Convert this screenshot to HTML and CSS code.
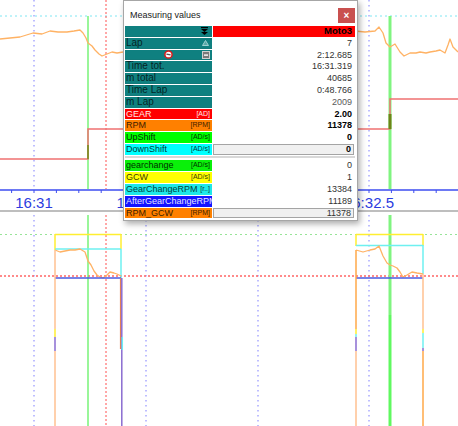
FILE: index.html
```html
<!DOCTYPE html>
<html>
<head>
<meta charset="utf-8">
<title>Measuring values</title>
<link rel="stylesheet" href="styles.css">
</head>
<body>
<div class="stage">
  <svg class="chart" width="458" height="426" viewBox="0 0 458 426">
    <defs>
      <clipPath id="clipL"><rect x="0" y="180" width="123" height="40"/></clipPath>
      <clipPath id="clipR"><rect x="358" y="180" width="100" height="40"/></clipPath>
    </defs>
    <!-- dotted grid -->
    <g class="dot-blue">
      <line x1="34" y1="0" x2="34" y2="189"/><line x1="34" y1="215" x2="34" y2="426"/>
      <line x1="146" y1="0" x2="146" y2="189"/><line x1="146" y1="215" x2="146" y2="426"/>
      <line x1="258" y1="0" x2="258" y2="189"/><line x1="258" y1="215" x2="258" y2="426"/>
      <line x1="369" y1="0" x2="369" y2="189"/><line x1="369" y1="215" x2="369" y2="426"/>
    </g>
    <line class="dot-cyan" x1="0" y1="16" x2="458" y2="16"/>
    <line class="dot-green" x1="0" y1="234.5" x2="458" y2="234.5"/>
    <line class="dot-redh" x1="0" y1="276" x2="458" y2="276"/>
    <line class="dot-red" x1="106" y1="0" x2="106" y2="189"/>
    <line class="dot-red" x1="106" y1="215" x2="106" y2="426"/>

    <!-- time axis -->
    <line class="axis" x1="0" y1="190" x2="458" y2="190"/>
    <g class="ticks">
      <line x1="11.6" y1="190" x2="11.6" y2="193"/><line x1="34" y1="190" x2="34" y2="193"/>
      <line x1="56.4" y1="190" x2="56.4" y2="193"/><line x1="78.8" y1="190" x2="78.8" y2="193"/>
      <line x1="101.2" y1="190" x2="101.2" y2="193"/><line x1="369" y1="190" x2="369" y2="193"/>
      <line x1="391.4" y1="190" x2="391.4" y2="193"/><line x1="413.8" y1="190" x2="413.8" y2="193"/>
      <line x1="436.2" y1="190" x2="436.2" y2="193"/>
    </g>
    <text class="tlabel" x="34" y="207.5">16:31</text>
    <g clip-path="url(#clipL)"><text class="tlabel tstart" x="116.5" y="207.5">1</text></g>
    <g clip-path="url(#clipR)"><text class="tlabel tend" x="394" y="207.5">6:32.5</text></g>
    <line class="sep" x1="0" y1="211" x2="458" y2="211"/>

    <!-- green cursors -->
    <line class="g1" x1="88" y1="16" x2="88" y2="189"/>
    <line class="g1" x1="88" y1="215" x2="88" y2="426"/>
    <line class="g2" x1="390" y1="16" x2="390" y2="189"/>
    <line class="g2" x1="390" y1="215" x2="390" y2="315"/>
    <line class="g3" x1="390" y1="315" x2="390" y2="426"/>

    <!-- top traces -->
    <polyline class="orange" points="0,39 20,37 33,33 42,34 50,31 58,32 67,32 74,31 80,30 83,33 86,38 88,43 92,46 95,50 99,54 102,56 107,54 112,52 117,53 123,52"/>
    <polyline class="orange" points="355,31 365,32 375,31 379,27 383,33 386,43 390,47 395,44 400,52 404,56 410,53 416,53 420,52 426,53 430,52 436,51 440,50 445,53 448,45 450,39 453,47 458,52"/>
    <polyline class="redline" points="0,159 88,159 88,129 130,129"/>
    <polyline class="redline" points="340,129 390,129 390,99 458,99"/>
    <line class="olive" x1="88" y1="145" x2="88" y2="159"/>
    <line class="olive2" x1="390" y1="114" x2="390" y2="129"/>

    <!-- bottom pulses: left -->
    <line class="yel" x1="55" y1="234.5" x2="121" y2="234.5"/>
    <line class="yel" x1="55" y1="234" x2="55" y2="250"/>
    <line class="yel" x1="121" y1="234" x2="121" y2="249"/>
    <line class="cya" x1="55" y1="249" x2="121" y2="249"/>
    <line class="cya" x1="121" y1="249" x2="121" y2="278"/>
    <polyline class="orange" points="55,250 60,252 65,251 70,250 75,250 80,249 85,252 88,261 91,265 94,271 97,275 100,277 103,278 107,275 110,272 114,273 117,274 121,276"/>
    <line class="blu" x1="55" y1="278" x2="121" y2="278"/>
    <line class="ovt" x1="55" y1="250" x2="55" y2="329"/>
    <line class="yel" x1="55" y1="329" x2="55" y2="337"/>
    <line class="pur" x1="55" y1="337" x2="55" y2="351"/>
    <line class="ovt" x1="55" y1="351" x2="55" y2="426"/>
    <line class="brn" x1="120.5" y1="278" x2="120.5" y2="349"/>
    <line class="pur" x1="121.8" y1="278" x2="121.8" y2="426"/>
    <line class="cya" x1="122.3" y1="337" x2="122.3" y2="350"/>

    <!-- bottom pulses: right -->
    <line class="yel" x1="356" y1="234.5" x2="423" y2="234.5"/>
    <line class="yel" x1="356" y1="234" x2="356" y2="246"/>
    <line class="yel" x1="423" y1="234" x2="423" y2="246"/>
    <line class="cya" x1="356" y1="245.5" x2="423" y2="245.5"/>
    <line class="cya" x1="423" y1="245" x2="423" y2="274"/>
    <polyline class="orange" points="356,250 363,252 370,250 375,249 379,246 383,256 387,263 390,265 393,266 397,268 400,272 403,277 407,275 412,272 417,273 423,274"/>
    <line class="blu" x1="356" y1="278" x2="423" y2="278"/>
    <line class="ovt2" x1="356" y1="250" x2="356" y2="329"/>
    <line class="yel" x1="356" y1="329" x2="356" y2="334"/>
    <line class="cya" x1="356" y1="334" x2="356" y2="337"/>
    <line class="pur" x1="356" y1="337" x2="356" y2="351"/>
    <line class="ovt" x1="356" y1="351" x2="356" y2="426"/>
    <line class="ovt" x1="423" y1="274" x2="423" y2="329"/>
    <line class="yel" x1="423" y1="329" x2="423" y2="333"/>
    <line class="cya" x1="423" y1="333" x2="423" y2="348"/>
    <line class="pur" x1="423" y1="348" x2="423" y2="351"/>
    <line class="ovt2" x1="423" y1="351" x2="423" y2="426"/>
  </svg>

  <div class="dlg">
    <div class="titlebar">
      <span class="title">Measuring values</span>
      <span class="close">×</span>
    </div>
    <div class="grid">
      <div class="lbl teal hdr">
        <svg class="ico-dd" width="7" height="8" viewBox="0 0 7 8"><rect x="0" y="0" width="7" height="1.2" fill="#000"/><polygon points="0,2 7,2 3.5,5" fill="#000"/><polygon points="0,5 7,5 3.5,8" fill="#000"/></svg>
      </div>
      <div class="val moto">Moto3</div>

      <div class="lbl teal"><span>Lap</span><svg class="ico-tri" width="7" height="6" viewBox="0 0 7 6"><polygon points="3.5,0.5 6.5,5.5 0.5,5.5" fill="#58a8a8" stroke="#9fd0d0" stroke-width="1"/></svg></div>
      <div class="val">7</div>

      <div class="lbl teal iconrow">
        <span></span>
        <svg class="ico-clock" width="9" height="9" viewBox="0 0 9 9"><circle cx="4.5" cy="4.5" r="3.6" fill="#fff" stroke="#e01818" stroke-width="1.5"/><line x1="2.4" y1="4.1" x2="6.6" y2="4.9" stroke="#555" stroke-width="1.2"/></svg>
        <svg class="ico-sq" width="8" height="8" viewBox="0 0 8 8"><rect x="0.5" y="0.5" width="7" height="7" fill="#7a7a7a" stroke="#d0d0d0"/><rect x="2" y="3.4" width="4" height="1.4" fill="#fff"/></svg>
      </div>
      <div class="val">2:12.685</div>

      <div class="lbl teal"><span>Time tot.</span></div>
      <div class="val">16:31.319</div>

      <div class="lbl teal"><span>m total</span></div>
      <div class="val">40685</div>

      <div class="lbl teal"><span>Time Lap</span></div>
      <div class="val">0:48.766</div>

      <div class="lbl teal"><span>m Lap</span></div>
      <div class="val grey">2009</div>

      <div class="lbl c-red"><span>GEAR</span><span class="unit">[AD]</span></div>
      <div class="val b">2.00</div>

      <div class="lbl c-orange"><span>RPM</span><span class="unit">[RPM]</span></div>
      <div class="val b">11378</div>

      <div class="lbl c-green"><span>UpShift</span><span class="unit">[AD/s]</span></div>
      <div class="val b">0</div>

      <div class="lbl c-cyan"><span>DownShift</span><span class="unit">[AD/s]</span></div>
      <div class="val b boxed">0</div>
    </div>
    <div class="divider"></div>
    <div class="grid">
      <div class="lbl c-green2"><span>gearchange</span><span class="unit">[AD/s]</span></div>
      <div class="val">0</div>

      <div class="lbl c-yellow"><span>GCW</span><span class="unit">[AD/s]</span></div>
      <div class="val">1</div>

      <div class="lbl c-cyan2"><span>GearChangeRPM</span><span class="unit">[r..]</span></div>
      <div class="val">13384</div>

      <div class="lbl c-blue"><span>AfterGearChangeRPM</span></div>
      <div class="val">11189</div>

      <div class="lbl c-orange"><span>RPM_GCW</span><span class="unit">[RPM]</span></div>
      <div class="val boxed">11378</div>
    </div>
  </div>
</div>
</body>
</html>
```

FILE: styles.css
```css
html, body {
  margin: 0;
  padding: 0;
  background: #ffffff;
}

.stage {
  position: relative;
  width: 458px;
  height: 426px;
  overflow: hidden;
  background: #ffffff;
  font-family: "Liberation Sans", Arial, sans-serif;
}

.chart {
  display: block;
}

/* chart strokes */
.dot-blue line {
  stroke: #a9a9ff;
  stroke-width: 1.5;
  stroke-dasharray: 1.5 3.5;
}
.dot-cyan {
  stroke: #7fe6f2;
  stroke-width: 1;
  stroke-dasharray: 2 3;
}
.dot-green {
  stroke: #98e498;
  stroke-width: 1;
  stroke-dasharray: 2 3;
}
.dot-red {
  stroke: #ff5050;
  stroke-width: 1;
  stroke-dasharray: 2 2;
}
.dot-redh {
  stroke: #ff6464;
  stroke-width: 1.6;
  stroke-dasharray: 2 2;
}
.axis {
  stroke: #3c4cf0;
  stroke-width: 1.5;
}
.ticks line {
  stroke: #3c4cf0;
  stroke-width: 1;
}
.tlabel {
  font-family: "Liberation Sans", Arial, sans-serif;
  font-size: 15px;
  fill: #2c3ce0;
  text-anchor: middle;
}
.tstart {
  text-anchor: start;
}
.tend {
  text-anchor: end;
}
.sep {
  stroke: #a8a8a8;
  stroke-width: 1.5;
}
.g1 {
  stroke: #55f055;
  stroke-width: 1.2;
}
.g2 {
  stroke: #80f480;
  stroke-width: 3;
}
.g3 {
  stroke: #60f860;
  stroke-width: 3;
}
.orange {
  fill: none;
  stroke: #ffb264;
  stroke-width: 1.3;
  stroke-linejoin: round;
}
.redline {
  fill: none;
  stroke: #f07272;
  stroke-width: 1.5;
}
.olive {
  stroke: #6e8e18;
  stroke-width: 1.5;
}
.olive2 {
  stroke: #6e8418;
  stroke-width: 3;
}
.yel {
  stroke: #ffee30;
  stroke-width: 1.5;
}
.cya {
  stroke: #6ef0f0;
  stroke-width: 1.5;
}
.blu {
  stroke: #4a5ae0;
  stroke-width: 1.5;
}
.pur {
  stroke: #8a6cd0;
  stroke-width: 1.5;
}
.ovt {
  stroke: #ffc090;
  stroke-width: 1.5;
}
.ovt2 {
  stroke: #ffa848;
  stroke-width: 1.5;
}
.brn {
  stroke: #e0805a;
  stroke-width: 1.2;
}

/* dialog */
.dlg {
  position: absolute;
  left: 123px;
  top: 0;
  width: 235px;
  box-sizing: border-box;
  border: 1px solid #a6a6a6;
  background: #ffffff;
  padding: 0 2px 2px 1px;
  box-shadow: 2px 3px 6px rgba(0, 0, 0, 0.32);
  display: flex;
  flex-direction: column;
}

.titlebar {
  height: 25px;
  display: flex;
  align-items: flex-start;
}

.title {
  padding: 8px 0 0 5px;
  font-size: 9px;
  line-height: 12px;
  color: #1a1a1a;
}

.close {
  margin-left: auto;
  margin-top: 7px;
  width: 17px;
  height: 15px;
  background: #c9504f;
  color: #ffffff;
  font-size: 10px;
  font-weight: bold;
  line-height: 15px;
  text-align: center;
}

.grid {
  display: grid;
  grid-template-columns: 87px 1fr;
  grid-auto-rows: 10.8px;
  column-gap: 1px;
  row-gap: 1px;
}

.divider {
  margin: 1px 0 2.7px;
  height: 2px;
  background: #d8d8d8;
}

.lbl {
  display: flex;
  align-items: center;
  justify-content: space-between;
  padding: 0 2px 0 1px;
  font-size: 9px;
  line-height: 10.8px;
  white-space: nowrap;
  overflow: hidden;
}

.unit {
  font-size: 7px;
  padding-left: 2px;
}

.teal {
  background: #0f8080;
  color: #042626;
  font-size: 10px;
  box-shadow: inset 0 -1px 0 #137a7a;
}

.hdr {
  justify-content: flex-end;
  padding-right: 3px;
}

.iconrow {
  display: grid;
  grid-template-columns: 1fr auto 1fr;
  align-items: center;
}

.ico-clock {
  display: block;
}

.ico-sq {
  display: block;
  justify-self: end;
}

.ico-tri,
.ico-dd {
  display: block;
  margin-right: 1px;
}

.c-red { background: #ff0000; color: #ffe6e6; }
.c-orange { background: #ff8000; color: #3c1e00; }
.c-green { background: #00ff00; color: #003300; }
.c-cyan { background: #00ffff; color: #003a3a; }
.c-green2 { background: #0af00a; color: #003000; }
.c-yellow { background: #ffff00; color: #3c3c00; }
.c-cyan2 { background: #1ee8e8; color: #004040; }
.c-blue { background: #1414ff; color: #e4e4ff; }

.val {
  text-align: right;
  padding-right: 3px;
  font-size: 9px;
  line-height: 10.8px;
  color: #333333;
  white-space: nowrap;
}

.grey {
  color: #5a5a5a;
}

.b {
  font-weight: bold;
  color: #000000;
}

.moto {
  background: #ff0000;
  color: #000000;
  font-weight: bold;
  font-size: 9.5px;
}

.boxed {
  box-sizing: border-box;
  margin-right: 1px;
  border: 1px solid #a4a4a4;
  background: #f0f0f0;
  line-height: 8.8px;
  padding-right: 2px;
}
```
